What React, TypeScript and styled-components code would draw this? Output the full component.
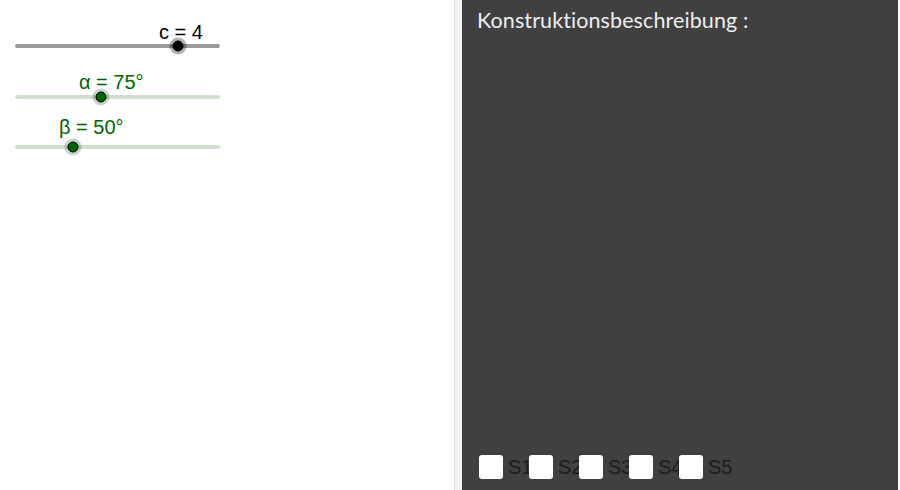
import styled, { createGlobalStyle } from 'styled-components';

const GlobalStyle = createGlobalStyle`
  html, body {
    margin: 0;
    padding: 0;
    background: #ffffff;
  }
  body {
    font-family: 'Liberation Sans', Arial, sans-serif;
  }
`;

type SliderData = {
  label: string;
  color: string;
  track: string;
  halo: string;
  knob: number; // knob centre, px from track start
  labelX: number; // label start, px from pane left
  gapTop: number; // space above label
  gapLabel: number; // space between label and track
};

const sliders: SliderData[] = [
  { label: 'c = 4', color: '#000000', track: '#9a9a9a', halo: 'rgba(0,0,0,0.3)', knob: 163, labelX: 159, gapTop: 21, gapLabel: 0 },
  { label: 'α = 75°', color: '#006400', track: '#cfe0cc', halo: 'rgba(0,60,0,0.22)', knob: 86, labelX: 79, gapTop: 23, gapLabel: 1 },
  { label: 'β = 50°', color: '#006400', track: '#cfe0cc', halo: 'rgba(0,60,0,0.22)', knob: 58, labelX: 59, gapTop: 17, gapLabel: 6 },
];

const steps = ['S1', 'S2', 'S3', 'S4', 'S5'];

const App = () => {
  return (
    <>
      <GlobalStyle />
      <Page>
        <GraphicsPane>
          {sliders.map((s) => (
            <Slider key={s.label} style={{ marginTop: s.gapTop }}>
              <SliderLabel $color={s.color} style={{ marginLeft: s.labelX, marginBottom: s.gapLabel }}>
                {s.label}
              </SliderLabel>
              <Track $color={s.track}>
                <Knob $color={s.color} $halo={s.halo} style={{ left: s.knob }} />
              </Track>
            </Slider>
          ))}
        </GraphicsPane>
        <Divider />
        <DescriptionPane>
          <Title>Konstruktionsbeschreibung :</Title>
          <StepRow>
            {steps.map((st) => (
              <Step key={st}>
                <Box />
                <StepLabel>{st}</StepLabel>
              </Step>
            ))}
          </StepRow>
        </DescriptionPane>
      </Page>
    </>
  );
};

const Page = styled.div`
  display: flex;
  width: 900px;
  height: 490px;
  overflow: hidden;
`;

const GraphicsPane = styled.div`
  width: 454px;
  flex: none;
  display: flex;
  flex-direction: column;
  background: #ffffff;
`;

const Slider = styled.div`
  display: flex;
  flex-direction: column;
`;

const SliderLabel = styled.div<{ $color: string }>`
  font-family: 'Liberation Sans', Arial, sans-serif;
  font-size: 20px;
  line-height: 23px;
  color: ${(p) => p.$color};
  white-space: nowrap;
`;

const Track = styled.div<{ $color: string }>`
  position: relative;
  margin-left: 15px;
  width: 205px;
  height: 4px;
  border-radius: 2px;
  background: ${(p) => p.$color};
`;

const Knob = styled.div<{ $color: string; $halo: string }>`
  position: absolute;
  top: 50%;
  width: 11px;
  height: 11px;
  box-sizing: border-box;
  border-radius: 50%;
  border: 1px solid #000;
  background: ${(p) => p.$color};
  box-shadow: 0 0 0 3px ${(p) => p.$halo};
  transform: translate(-50%, -50%);
`;

const Divider = styled.div`
  width: 7px;
  flex: none;
  border-left: 1px solid #dcdcdc;
  background: #f2f2f2;
`;

const DescriptionPane = styled.div`
  flex: 1;
  display: flex;
  flex-direction: column;
  justify-content: space-between;
  background: #404040;
  padding: 8px 0 11px 15px;
  margin-right: 2px;
`;

const Title = styled.div`
  font-family: Lato, 'Open Sans', sans-serif;
  font-size: 21.5px;
  font-variant-ligatures: none;
  letter-spacing: 0.1px;
  line-height: 24px;
  color: #eeeeee;
`;

const StepRow = styled.div`
  display: flex;
  padding-left: 2px;
`;

const Step = styled.div`
  width: 50px;
  flex: none;
  display: flex;
  align-items: center;
  gap: 5px;
`;

const Box = styled.div`
  width: 24px;
  height: 24px;
  flex: none;
  border-radius: 3px;
  background: #ffffff;
`;

const StepLabel = styled.span`
  font-family: 'Liberation Sans', Arial, sans-serif;
  font-size: 20px;
  line-height: 24px;
  color: #1c1c1c;
  white-space: nowrap;
`;

export default App;
